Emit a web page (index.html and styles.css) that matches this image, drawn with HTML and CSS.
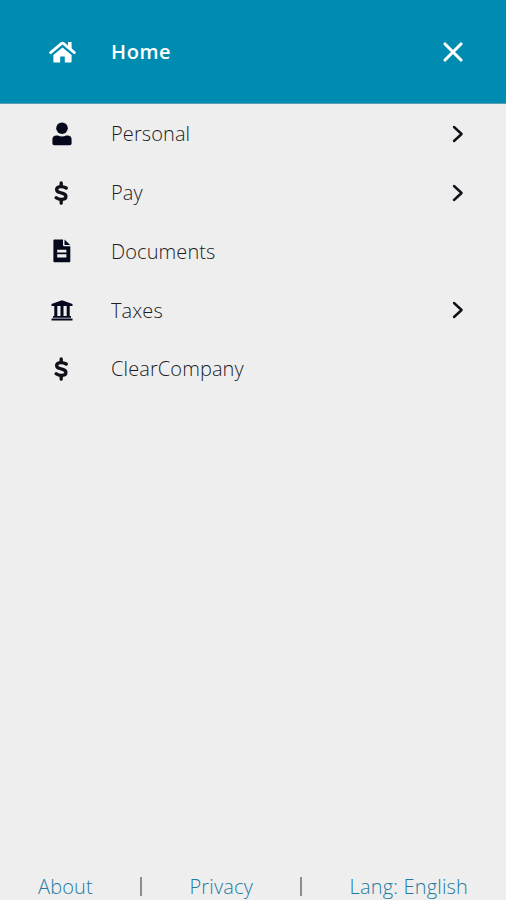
FILE: index.html
```
<!DOCTYPE html>
<html lang="en">
<head>
    <meta charset="UTF-8">
    <meta name="viewport" content="width=device-width, initial-scale=1.0">
    <title>Menu</title>
    <link rel="stylesheet" href="styles.css">
</head>
<body>
    <header class="menu-header">
        <span class="icon">
            <svg width="27" height="22" viewBox="0 0 27 22" fill="#fff">
                <path d="M13.5 6.4 4.4 14V20.6q0 .9.9.9H10.600q.6 0 .6-.6V15.500h4.600v5.400q0 .6.6.6h5.300q.9 0 .9-.9V14z"/>
                <path d="M1.600 11.600 12.400 2.600q1.100-.9 2.200 0L25.400 11.600" fill="none" stroke="#fff" stroke-width="2.700" stroke-linecap="round"/>
                <path d="M19 .9h3.600v8.500L19 6.400z"/>
            </svg>
        </span>
        <span class="title">Home</span>
        <button class="close" aria-label="Close">
            <svg width="20" height="20" viewBox="0 0 20 20" fill="none" stroke="#fff" stroke-width="3.1" stroke-linecap="round">
                <path d="M2 2 18 18M18 2 2 18"/>
            </svg>
        </button>
    </header>

    <nav class="menu">
        <a class="menu-item">
            <span class="icon">
                <svg width="20" height="24" viewBox="0 0 20 24">
                    <circle cx="10" cy="6.2" r="5.8"/>
                    <path d="M.4 21.4V17.6Q.4 13.4 4.6 13.4H5.8Q10 15.4 14.2 13.4h1.2q4.2 0 4.2 4.2v3.8q0 1.8-1.8 1.8H2.2Q.4 23.2.4 21.4z"/>
                </svg>
            </span>
            <span class="label">Personal</span>
            <svg class="chevron" width="12" height="18" viewBox="0 0 12 18"><path d="M2 2 9.6 9 2 16"/></svg>
        </a>
        <a class="menu-item">
            <span class="icon">
                <svg class="dollar" width="16" height="24" viewBox="0 0 16 24">
                    <path d="M12.200 7Q10 5.600 7.200 5.600q-4.600 0-4.600 2.900 0 2.200 3.300 3l2.800.8q3.200.9 3.200 3.100 0 3-4.700 3Q4.400 18.400 2.200 16.700"/>
                    <path d="M7.200 1.800V5M7.200 19v3.200"/>
                </svg>
            </span>
            <span class="label">Pay</span>
            <svg class="chevron" width="12" height="18" viewBox="0 0 12 18"><path d="M2 2 9.6 9 2 16"/></svg>
        </a>
        <a class="menu-item">
            <span class="icon">
                <svg width="18" height="24" viewBox="0 0 18 24">
                    <path fill-rule="evenodd" d="M1.4.5H10V6q0 1.2 1.2 1.2h6.1V22.2q0 1.1-1.1 1.1H1.4Q.4 23.3.4 22.2V1.5Q.4.5 1.4.5zM4.200 10.800V13.500H13.400V10.800zM4.200 15.200V18.600H13.400V15.200z"/>
                    <path d="M11.5.6 17.2 6H11.5z"/>
                </svg>
            </span>
            <span class="label">Documents</span>
        </a>
        <a class="menu-item">
            <span class="icon">
                <svg width="22" height="21" viewBox="0 0 22 21">
                    <path d="M11 .3 21.5 4v2H.5V4z"/>
                    <path d="M3.3 6h3v10.5h-3zM9.500 6h3v10.500h-3zM15.700 6h3v10.500h-3z"/>
                    <path d="M2 16h18v1.800H2zM.5 18.400h21v2H.5z"/>
                </svg>
            </span>
            <span class="label">Taxes</span>
            <svg class="chevron" width="12" height="18" viewBox="0 0 12 18"><path d="M2 2 9.6 9 2 16"/></svg>
        </a>
        <a class="menu-item">
            <span class="icon">
                <svg class="dollar" width="16" height="24" viewBox="0 0 16 24">
                    <path d="M12.200 7Q10 5.600 7.200 5.600q-4.600 0-4.600 2.900 0 2.200 3.300 3l2.800.8q3.200.9 3.200 3.100 0 3-4.700 3Q4.400 18.400 2.200 16.700"/>
                    <path d="M7.200 1.800V5M7.200 19v3.200"/>
                </svg>
            </span>
            <span class="label">ClearCompany</span>
        </a>
    </nav>

    <footer class="footer">
        <a>About</a>
        <span class="divider"></span>
        <a>Privacy</a>
        <span class="divider"></span>
        <a>Lang: English</a>
    </footer>
</body>
</html>
```

FILE: styles.css
```
* {
    box-sizing: border-box;
}
body {
    margin: 0;
    height: 100vh;
    display: flex;
    flex-direction: column;
    overflow: hidden;
    background: #eeeeee;
    color: #1c1c24;
    font-family: "Open Sans", sans-serif;
    font-size: 20px;
}
svg {
    display: block;
}
.menu-header {
    display: flex;
    align-items: center;
    height: 104px;
    padding: 0 43px 0 47px;
    background: #008bb0;
    border-bottom: 1px solid #5f9fb4;
    color: #fff;
}
.icon {
    display: flex;
    justify-content: center;
    width: 30px;
    margin-right: 34px;
    fill: #05081c;
}
.title {
    flex: 1;
    font-weight: 600;
    letter-spacing: 0.6px;
}
.close {
    padding: 0;
    border: 0;
    background: none;
}
.menu {
    flex: 1;
    padding-top: 0.6px;
}
.menu-item {
    display: flex;
    align-items: center;
    height: 58.75px;
    padding: 0 42px 0 47px;
}
.label {
    flex: 1;
    font-weight: 300;
    letter-spacing: 0.1px;
}
.dollar,
.chevron {
    fill: none;
    stroke: #101018;
    stroke-linecap: round;
    stroke-linejoin: round;
}
.dollar {
    stroke-width: 3.3;
}
.chevron {
    stroke-width: 2.4;
}
.footer {
    display: flex;
    justify-content: space-between;
    align-items: center;
    height: 28px;
    padding: 0 38px;
    color: #1f7ba0;
    font-weight: 300;
    letter-spacing: 0.15px;
}
.divider {
    width: 2px;
    height: 19px;
    background: #8c8c8c;
}
```
